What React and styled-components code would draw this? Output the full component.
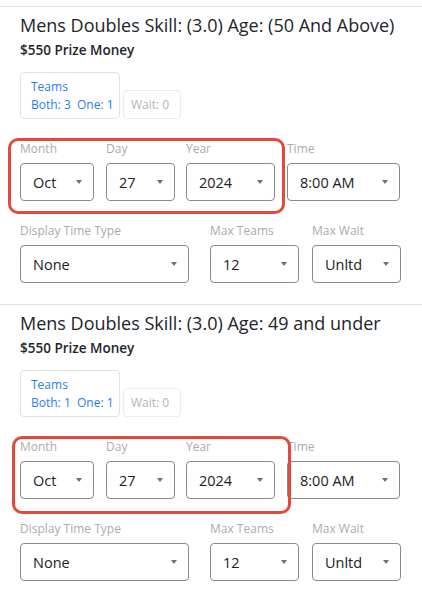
import React from 'react';
import styled, { createGlobalStyle } from 'styled-components';

const GlobalStyle = createGlobalStyle`
  html, body {
    margin: 0;
    padding: 0;
    background: #ffffff;
  }
  body {
    font-family: "Open Sans", "Noto Sans", Arial, sans-serif;
    color: #212529;
  }
  * {
    box-sizing: border-box;
  }
`;

const eventos = [
  {
    titulo: 'Mens Doubles Skill: (3.0) Age: (50 And Above)',
    both: 3,
    one: 1,
    marco: { top: 131, left: 8, width: 277, height: 76 },
  },
  {
    titulo: 'Mens Doubles Skill: (3.0) Age: 49 and under',
    both: 1,
    one: 1,
    marco: { top: 131, left: 12, width: 279, height: 78 },
  },
];

export default function App() {
  return (
    <Pagina>
      <GlobalStyle />
      {eventos.map((ev, i) => (
        <Evento key={i}>
          <Titulo>{ev.titulo}</Titulo>
          <Premio>$550 Prize Money</Premio>

          <Estadisticas>
            <Caja>
              <div>Teams</div>
              <div>Both: {ev.both}&nbsp; One: {ev.one}</div>
            </Caja>
            <Caja $apagada>Wait: 0</Caja>
          </Estadisticas>

          <Fila>
            <Campo $w={74}>
              <Etiqueta>Month</Etiqueta>
              <Selector valor="Oct" />
            </Campo>
            <Campo $w={69} $ml={12}>
              <Etiqueta>Day</Etiqueta>
              <Selector valor="27" />
            </Campo>
            <Campo $w={89} $ml={11}>
              <Etiqueta>Year</Etiqueta>
              <Selector valor="2024" />
            </Campo>
            <Campo $w={113} $ml={12}>
              <Etiqueta>Time</Etiqueta>
              <Selector valor="8:00 AM" />
            </Campo>
          </Fila>

          <Fila $mt={21}>
            <Campo $w={169}>
              <Etiqueta>Display Time Type</Etiqueta>
              <Selector valor="None" />
            </Campo>
            <Campo $w={89} $ml={21}>
              <Etiqueta>Max Teams</Etiqueta>
              <Selector valor="12" />
            </Campo>
            <Campo $w={89} $ml={13}>
              <Etiqueta>Max Wait</Etiqueta>
              <Selector valor="Unltd" />
            </Campo>
          </Fila>

          {/* Marca roja sobre la fecha */}
          <Marco style={ev.marco} />
        </Evento>
      ))}
    </Pagina>
  );
}

function Selector({ valor }) {
  return (
    <Select>
      <span>{valor}</span>
      <Flecha />
    </Select>
  );
}

// Estilos
const Pagina = styled.div`
  padding-top: 6px;
`;

const Evento = styled.section`
  position: relative;
  border-top: 1px solid #e3e3e3;
  padding: 6px 20px 21px;
`;

const Titulo = styled.h2`
  margin: 0;
  font-size: 18px;
  line-height: 24px;
  font-weight: 500;
  color: #212529;
  white-space: nowrap;
`;

const Premio = styled.div`
  margin-top: 3px;
  font-size: 13.5px;
  line-height: 20px;
  font-weight: 600;
  color: #212529;
`;

const Estadisticas = styled.div`
  display: flex;
  align-items: flex-end;
  gap: 3px;
  margin-top: 12px;
`;

const Caja = styled.div`
  border: 1px solid ${(p) => (p.$apagada ? '#ececec' : '#e2e2e2')};
  border-radius: 4px;
  padding: ${(p) => (p.$apagada ? '5px 7px 4px' : '5px 10px 4px')};
  width: ${(p) => (p.$apagada ? '58px' : '100px')};
  font-size: 12px;
  line-height: 18px;
  color: ${(p) => (p.$apagada ? '#b3b3b3' : '#2b7cf2')};
  white-space: nowrap;
`;

const Fila = styled.div`
  display: flex;
  margin-top: ${(p) => (p.$mt ? `${p.$mt}px` : '21px')};
`;

const Campo = styled.div`
  width: ${(p) => p.$w}px;
  margin-left: ${(p) => (p.$ml ? `${p.$ml}px` : '0')};
  flex-shrink: 0;
`;

const Etiqueta = styled.div`
  font-size: 12px;
  line-height: 18px;
  color: #ababab;
  margin-bottom: 5px;
  white-space: nowrap;
`;

const Select = styled.div`
  display: flex;
  align-items: center;
  justify-content: space-between;
  height: 38px;
  border: 1px solid #8a8a8a;
  border-radius: 4px;
  padding: 0 11px 0 12px;
  font-size: 14.5px;
  font-weight: 500;
  color: #222;
  white-space: nowrap;
`;

const Flecha = styled.span`
  width: 0;
  height: 0;
  border-left: 3.5px solid transparent;
  border-right: 3.5px solid transparent;
  border-top: 4px solid #707070;
`;

const Marco = styled.div`
  position: absolute;
  border: 3px solid #e24a3a;
  border-radius: 10px;
  pointer-events: none;
`;
